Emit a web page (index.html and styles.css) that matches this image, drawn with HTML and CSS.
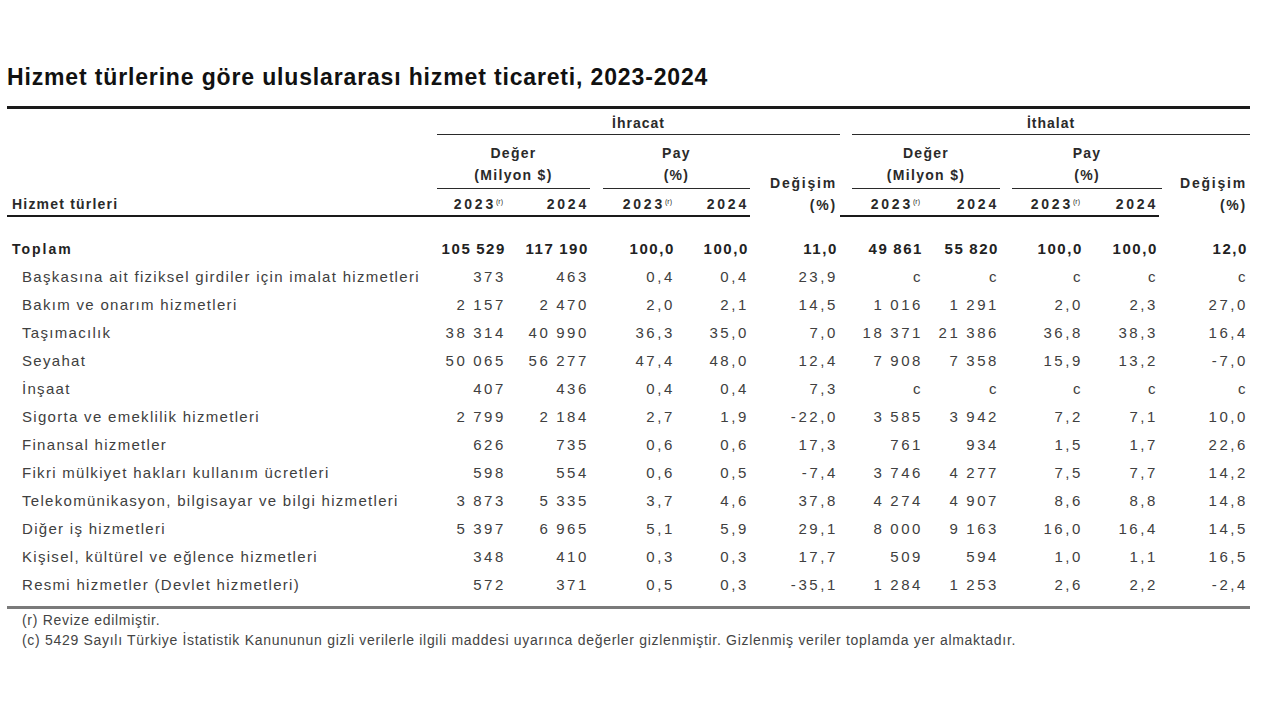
FILE: index.html
```html
<!DOCTYPE html>
<html lang="tr">
<head>
<meta charset="utf-8">
<title>Hizmet türlerine göre uluslararası hizmet ticareti, 2023-2024</title>
<link rel="stylesheet" href="styles.css">
</head>
<body>
<div class="page">
  <h1 class="title">Hizmet türlerine göre uluslararası hizmet ticareti, 2023-2024</h1>
  <table class="tbl">
    <colgroup>
      <col class="c-label">
      <col class="c-a1"><col class="c-a2"><col class="c-a3"><col class="c-a4"><col class="c-a5">
      <col class="c-gap">
      <col class="c-b1"><col class="c-b2"><col class="c-b3"><col class="c-b4"><col class="c-b5">
    </colgroup>
    <thead>
      <tr class="h1">
        <th rowspan="3" class="lbl-h">Hizmet türleri</th>
        <th colspan="5" class="grp">İhracat</th>
        <th class="gap"></th>
        <th colspan="5" class="grp">İthalat</th>
      </tr>
      <tr class="h2">
        <th colspan="2" class="sub"><div class="sub-in deger">Değer<br>(Milyon $)</div></th>
        <th colspan="2" class="sub"><div class="sub-in pay">Pay<br>(%)</div></th>
        <th rowspan="2" class="chg">Değişim<br>(%)</th>
        <th class="gap"></th>
        <th colspan="2" class="sub"><div class="sub-in deger">Değer<br>(Milyon $)</div></th>
        <th colspan="2" class="sub"><div class="sub-in pay2">Pay<br>(%)</div></th>
        <th rowspan="2" class="chg">Değişim<br>(%)</th>
      </tr>
      <tr class="h3">
        <th class="yr">2023<sup>(r)</sup></th>
        <th class="yr">2024</th>
        <th class="yr">2023<sup>(r)</sup></th>
        <th class="yr">2024</th>
        <th class="gap"></th>
        <th class="yr">2023<sup>(r)</sup></th>
        <th class="yr">2024</th>
        <th class="yr">2023<sup>(r)</sup></th>
        <th class="yr">2024</th>
      </tr>
    </thead>
    <tbody>
      <tr class="total first">
        <td class="lbl">Toplam</td>
        <td>105 529</td><td>117 190</td><td>100,0</td><td>100,0</td><td class="e">11,0</td><td class="gap"></td>
        <td>49 861</td><td>55 820</td><td>100,0</td><td>100,0</td><td class="e">12,0</td>
      </tr>
      <tr>
        <td class="lbl ind">Başkasına ait fiziksel girdiler için imalat hizmetleri</td>
        <td>373</td><td>463</td><td>0,4</td><td>0,4</td><td class="e">23,9</td><td class="gap"></td>
        <td>c</td><td>c</td><td>c</td><td>c</td><td class="e">c</td>
      </tr>
      <tr>
        <td class="lbl ind">Bakım ve onarım hizmetleri</td>
        <td>2 157</td><td>2 470</td><td>2,0</td><td>2,1</td><td class="e">14,5</td><td class="gap"></td>
        <td>1 016</td><td>1 291</td><td>2,0</td><td>2,3</td><td class="e">27,0</td>
      </tr>
      <tr>
        <td class="lbl ind">Taşımacılık</td>
        <td>38 314</td><td>40 990</td><td>36,3</td><td>35,0</td><td class="e">7,0</td><td class="gap"></td>
        <td>18 371</td><td>21 386</td><td>36,8</td><td>38,3</td><td class="e">16,4</td>
      </tr>
      <tr>
        <td class="lbl ind">Seyahat</td>
        <td>50 065</td><td>56 277</td><td>47,4</td><td>48,0</td><td class="e">12,4</td><td class="gap"></td>
        <td>7 908</td><td>7 358</td><td>15,9</td><td>13,2</td><td class="e">-7,0</td>
      </tr>
      <tr>
        <td class="lbl ind">İnşaat</td>
        <td>407</td><td>436</td><td>0,4</td><td>0,4</td><td class="e">7,3</td><td class="gap"></td>
        <td>c</td><td>c</td><td>c</td><td>c</td><td class="e">c</td>
      </tr>
      <tr>
        <td class="lbl ind">Sigorta ve emeklilik hizmetleri</td>
        <td>2 799</td><td>2 184</td><td>2,7</td><td>1,9</td><td class="e">-22,0</td><td class="gap"></td>
        <td>3 585</td><td>3 942</td><td>7,2</td><td>7,1</td><td class="e">10,0</td>
      </tr>
      <tr>
        <td class="lbl ind">Finansal hizmetler</td>
        <td>626</td><td>735</td><td>0,6</td><td>0,6</td><td class="e">17,3</td><td class="gap"></td>
        <td>761</td><td>934</td><td>1,5</td><td>1,7</td><td class="e">22,6</td>
      </tr>
      <tr>
        <td class="lbl ind">Fikri mülkiyet hakları kullanım ücretleri</td>
        <td>598</td><td>554</td><td>0,6</td><td>0,5</td><td class="e">-7,4</td><td class="gap"></td>
        <td>3 746</td><td>4 277</td><td>7,5</td><td>7,7</td><td class="e">14,2</td>
      </tr>
      <tr>
        <td class="lbl ind">Telekomünikasyon, bilgisayar ve bilgi hizmetleri</td>
        <td>3 873</td><td>5 335</td><td>3,7</td><td>4,6</td><td class="e">37,8</td><td class="gap"></td>
        <td>4 274</td><td>4 907</td><td>8,6</td><td>8,8</td><td class="e">14,8</td>
      </tr>
      <tr>
        <td class="lbl ind">Diğer iş hizmetleri</td>
        <td>5 397</td><td>6 965</td><td>5,1</td><td>5,9</td><td class="e">29,1</td><td class="gap"></td>
        <td>8 000</td><td>9 163</td><td>16,0</td><td>16,4</td><td class="e">14,5</td>
      </tr>
      <tr>
        <td class="lbl ind">Kişisel, kültürel ve eğlence hizmetleri</td>
        <td>348</td><td>410</td><td>0,3</td><td>0,3</td><td class="e">17,7</td><td class="gap"></td>
        <td>509</td><td>594</td><td>1,0</td><td>1,1</td><td class="e">16,5</td>
      </tr>
      <tr class="last">
        <td class="lbl ind">Resmi hizmetler (Devlet hizmetleri)</td>
        <td>572</td><td>371</td><td>0,5</td><td>0,3</td><td class="e">-35,1</td><td class="gap"></td>
        <td>1 284</td><td>1 253</td><td>2,6</td><td>2,2</td><td class="e">-2,4</td>
      </tr>
    </tbody>
  </table>
  <div class="notes">
    <p>(r) Revize edilmiştir.</p>
    <p>(c) 5429 Sayılı Türkiye İstatistik Kanununun gizli verilerle ilgili maddesi uyarınca değerler gizlenmiştir. Gizlenmiş veriler toplamda yer almaktadır.</p>
  </div>
</div>
</body>
</html>
```

FILE: styles.css
```css
html, body {
  margin: 0;
  padding: 0;
  background: #ffffff;
}
body {
  font-family: "Liberation Sans", Arial, sans-serif;
  color: #3a3a3a;
}
.page {
  padding: 0 30px 0 7px;
}
.title {
  margin: 0;
  padding-top: 64px;
  font-size: 23px;
  line-height: 26px;
  font-weight: bold;
  color: #111;
  letter-spacing: 0.85px;
}
.tbl {
  margin-top: 16px;
  width: 1243px;
  table-layout: fixed;
  border-collapse: collapse;
  border-top: 3px solid #1a1a1a;
}
.c-label { width: 430px; }
.c-a1 { width: 70px; }
.c-a2 { width: 83px; }
.c-a3 { width: 86px; }
.c-a4 { width: 74px; }
.c-a5 { width: 90px; }
.c-gap { width: 12px; }
.c-b1 { width: 72px; }
.c-b2 { width: 76px; }
.c-b3 { width: 84px; }
.c-b4 { width: 75px; }
.c-b5 { width: 91px; }

th {
  font-size: 14px;
  font-weight: bold;
  line-height: 22px;
  color: #2a2a2a;
  padding: 0;
  white-space: nowrap;
}
.h1 th.grp {
  padding-top: 3px;
  border-bottom: 1px solid #2a2a2a;
  text-align: center;
  letter-spacing: 1px;
}
.h1 th.lbl-h {
  font-size: 14px;
  letter-spacing: 1.2px;
  text-align: left;
  vertical-align: bottom;
  padding-left: 5px;
}
.h2 th.sub {
  padding-top: 7px;
  text-align: center;
  vertical-align: bottom;
}
.sub-in {
  border-bottom: 1px solid #2a2a2a;
  padding-bottom: 2px;
  letter-spacing: 1.3px;
}
.sub-in.pay { margin-left: 13px; }
.sub-in.pay2 { margin-left: 12px; margin-right: -3px; }
.h2 th.chg {
  text-align: right;
  vertical-align: bottom;
  padding-right: 3px;
  letter-spacing: 1.8px;
}
.h3 th.yr {
  padding-top: 4px;
  text-align: right;
  padding-right: 1px;
  letter-spacing: 2.8px;
}
sup {
  font-size: 7px;
  line-height: 0;
  vertical-align: 5px;
  letter-spacing: 0;
  font-weight: normal;
}
.h3 th.yr sup {
  margin-right: 3px;
}
thead tr.h3 th {
  border-bottom: 2px solid #1a1a1a;
}
thead tr.h1 th.lbl-h {
  border-bottom: 2px solid #1a1a1a;
}
thead th.gap {
  border-bottom: none;
}
thead tr.h3 th.gap {
  border-bottom: 2px solid #1a1a1a;
}

td {
  font-size: 15px;
  line-height: 28px;
  height: 28px;
  padding: 0 1px 0 0;
  text-align: right;
  white-space: nowrap;
  color: #404040;
  letter-spacing: 2.6px;
  word-spacing: -1px;
}
td.e { padding-right: 2px; }
td.lbl {
  text-align: left;
  padding-left: 3px;
  font-size: 15px;
  letter-spacing: 1.3px;
  word-spacing: 0;
}
td.lbl.ind { padding-left: 15px; }
tr.total td {
  font-weight: bold;
  color: #222;
  letter-spacing: 1.6px;
}
tr.total td.lbl {
  font-size: 14px;
  letter-spacing: 2px;
  padding-left: 5px;
}
tr.first td {
  padding-top: 18px;
}
tr.last td {
  padding-bottom: 7px;
  border-bottom: 3px solid #7a7a7a;
}
.notes {
  padding-left: 15px;
  padding-top: 1px;
}
.notes p {
  margin: 0;
  font-size: 14px;
  line-height: 20px;
  color: #444;
  letter-spacing: 0.7px;
}
```
